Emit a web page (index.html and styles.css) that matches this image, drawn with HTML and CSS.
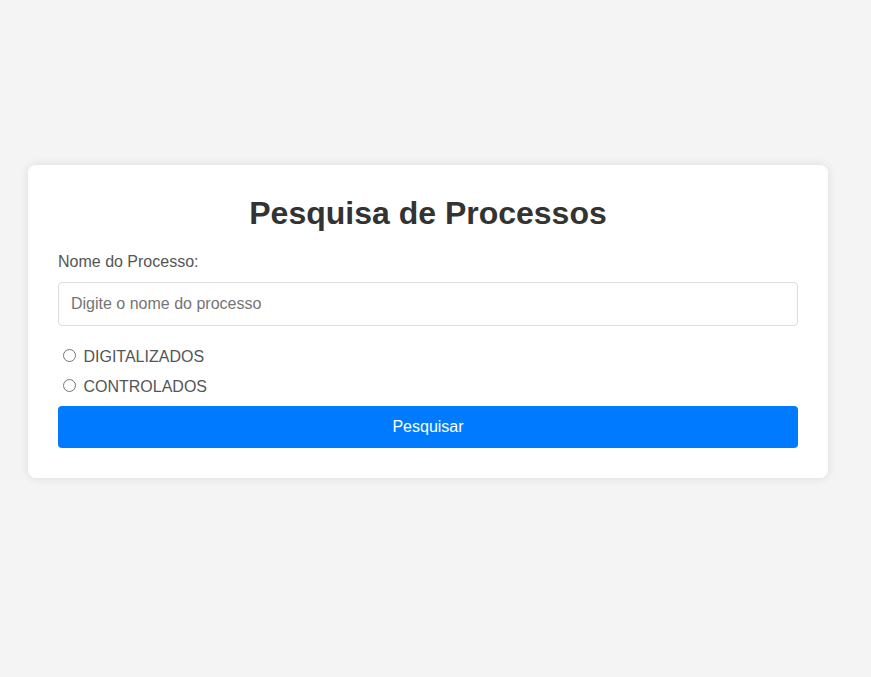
FILE: index.html
```html
<!DOCTYPE html>
<html lang="pt">
<head>
<meta charset="utf-8">
<title>Pesquisa de Processos</title>
<link rel="stylesheet" href="styles.css">
</head>
<body>
<div class="card">
  <h1 class="title">Pesquisa de Processos</h1>
  <label class="field-label" for="nome">Nome do Processo:</label>
  <input class="text-input" id="nome" type="text" placeholder="Digite o nome do processo">
  <div class="options">
    <label class="option"><input type="radio" name="tipo" value="digitalizados"> DIGITALIZADOS</label>
    <label class="option"><input type="radio" name="tipo" value="controlados"> CONTROLADOS</label>
  </div>
  <button class="btn" type="button">Pesquisar</button>
</div>
</body>
</html>
```

FILE: styles.css
```css
html, body {
  margin: 0;
  padding: 0;
}
body {
  background: #f4f4f4;
  font-family: "Liberation Sans", Arial, sans-serif;
  color: #333;
  padding: 165px 0 0 28px;
  min-height: 100vh;
  box-sizing: border-box;
}
.card {
  width: 800px;
  box-sizing: border-box;
  background: #fff;
  border-radius: 8px;
  box-shadow: 0 0 10px rgba(0, 0, 0, 0.1);
  padding: 30px;
  display: flex;
  flex-direction: column;
}
.title {
  margin: 0 0 20px;
  font-size: 32px;
  line-height: 37px;
  text-align: center;
  color: #333;
}
.field-label {
  display: block;
  font-size: 16px;
  line-height: 18px;
  color: #555;
  margin: 1px 0 11px;
}
.text-input {
  display: block;
  width: 100%;
  box-sizing: border-box;
  height: 44px;
  padding: 12px;
  font-family: "Liberation Sans", Arial, sans-serif;
  font-size: 16px;
  border: 1px solid #ddd;
  border-radius: 4px;
  color: #333;
  outline: none;
}
.text-input::placeholder {
  color: #757575;
}
.options {
  display: flex;
  flex-direction: column;
  margin-top: 20px;
}
.option {
  display: block;
  font-size: 16px;
  line-height: 18px;
  color: #555;
  margin-bottom: 10px;
}
.option input {
  margin: 3px 3px 0 5px;
}
.options .option:last-child {
  margin-bottom: 10px;
}
.btn {
  display: block;
  width: 100%;
  height: 42px;
  border: none;
  border-radius: 4px;
  background: #007bff;
  color: #fff;
  font-family: "Liberation Sans", Arial, sans-serif;
  font-size: 16px;
  cursor: pointer;
}
```
